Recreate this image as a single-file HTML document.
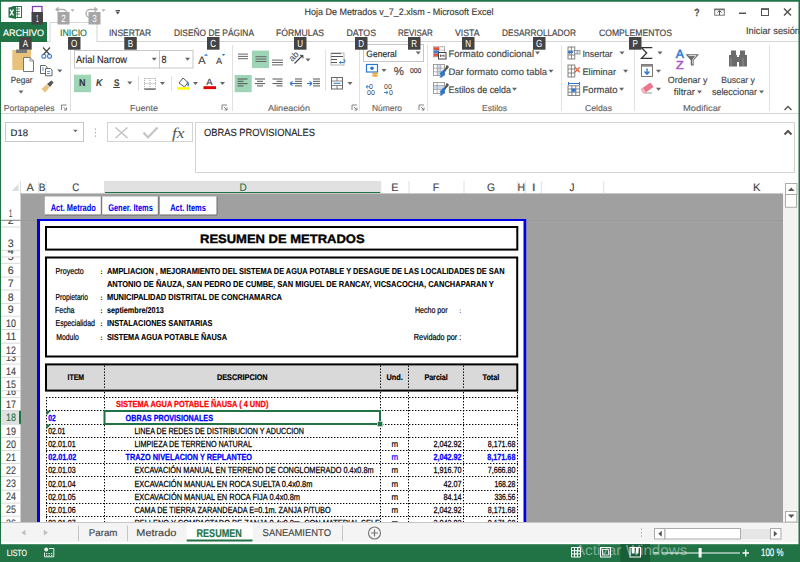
<!DOCTYPE html>
<html><head><meta charset="utf-8"><style>
html,body{margin:0;padding:0;width:800px;height:562px;overflow:hidden;background:#fff}
svg{display:block}
text{font-family:"Liberation Sans",sans-serif;text-rendering:geometricPrecision}
</style></head><body>
<svg width="800" height="562" viewBox="0 0 800 562">
<rect x="0" y="0" width="800" height="562" fill="#fff" />
<rect x="0" y="173" width="800" height="349" fill="#fff" />
<rect x="20" y="194" width="763" height="328" fill="#a0a0a0" />
<rect x="0" y="0" width="800" height="1.5" fill="#217346" />
<rect x="0" y="0" width="1" height="562" fill="#217346" />
<rect x="799" y="0" width="1" height="562" fill="#217346" />
<g><rect x="13" y="6.5" width="8.5" height="11" fill="#fff" stroke="#217346" stroke-width="1"/><path d="M15 9h5M15 11.5h5M15 14h5M17.3 7v10" stroke="#217346" stroke-width="0.8"/><path d="M8.5 7.5l7.5-1.5v13l-7.5-1.5z" fill="#217346"/><path d="M10 9.5l3.5 6M13.5 9.5l-3.5 6" stroke="#fff" stroke-width="1.4"/></g>
<rect x="32.5" y="6.5" width="9.5" height="7" fill="none" stroke="#7c43a8" stroke-width="1.3"/>
<path d="M56 9.5h7a4 4 0 0 1 0 8h-3" fill="none" stroke="#b0b0b0" stroke-width="1.4"/><path d="M55 9.5l3.5-3v6z" fill="#b0b0b0"/>
<path d="M70.5 9.25h4l-2.0 2.5z" fill="#b0b0b0"/>
<path d="M97 9.5h-7a4 4 0 0 0 0 8h3" fill="none" stroke="#b0b0b0" stroke-width="1.4"/><path d="M98 9.5l-3.5-3v6z" fill="#b0b0b0"/>
<path d="M101.5 9.25h4l-2.0 2.5z" fill="#b0b0b0"/>
<rect x="115.5" y="10" width="4.5" height="1" fill="#555" />
<path d="M115.5 11.5h4.5l-2.25 3z" fill="#555"/>
<text x="304.5" y="15.4" font-size="9.44" fill="#3a3a3a" stroke="#3a3a3a" stroke-width="0.15" textLength="189.00" lengthAdjust="spacingAndGlyphs" >Hoja De Metrados v_7_2.xlsm - Microsoft Excel</text>
<text x="694.2" y="15.7" font-size="10.42" fill="#555" stroke="#555" stroke-width="0.3" font-weight="bold" textLength="5.30" lengthAdjust="spacingAndGlyphs" >?</text>
<rect x="714.7" y="9.2" width="9.6" height="6" fill="none" stroke="#777" stroke-width="1"/><rect x="714.2" y="8.7" width="10.5" height="1.6" fill="#777"/><path d="M719.5 15v-4.2M717.5 12.6l2-2 2 2" fill="none" stroke="#555" stroke-width="1"/>
<rect x="739" y="12.5" width="7" height="1.5" fill="#555" />
<rect x="761.5" y="9" width="7" height="6.5" fill="none" stroke="#555" stroke-width="1"/>
<rect x="761" y="8.3" width="8" height="1.6" fill="#555" />
<path d="M784 8.5l7 7M791 8.5l-7 7" stroke="#555" stroke-width="1.5"/>
<rect x="0" y="22" width="47" height="20" fill="#217346" />
<text x="3" y="35.5" font-size="9.31" fill="#fff" stroke="#fff" stroke-width="0.15" textLength="41.00" lengthAdjust="spacingAndGlyphs" >ARCHIVO</text>
<line x1="47" y1="41.5" x2="50" y2="41.5" stroke="#d5d5d5" stroke-width="1" />
<line x1="97" y1="41.5" x2="800" y2="41.5" stroke="#d5d5d5" stroke-width="1" />
<path d="M50 42V22.5H97V42" fill="none" stroke="#d5d5d5" stroke-width="1"/>
<text x="60" y="35.5" font-size="9.31" fill="#217346" stroke="#217346" stroke-width="0.15" textLength="27.00" lengthAdjust="spacingAndGlyphs" >INICIO</text>
<text x="109" y="35.5" font-size="9.31" fill="#444" stroke="#444" stroke-width="0.15" textLength="42.00" lengthAdjust="spacingAndGlyphs" >INSERTAR</text>
<text x="174" y="35.5" font-size="9.31" fill="#444" stroke="#444" stroke-width="0.15" textLength="80.00" lengthAdjust="spacingAndGlyphs" >DISEÑO DE PÁGINA</text>
<text x="276" y="35.5" font-size="9.31" fill="#444" stroke="#444" stroke-width="0.15" textLength="48.00" lengthAdjust="spacingAndGlyphs" >FÓRMULAS</text>
<text x="346.5" y="35.5" font-size="9.31" fill="#444" stroke="#444" stroke-width="0.15" textLength="29.50" lengthAdjust="spacingAndGlyphs" >DATOS</text>
<text x="398" y="35.5" font-size="9.31" fill="#444" stroke="#444" stroke-width="0.15" textLength="34.80" lengthAdjust="spacingAndGlyphs" >REVISAR</text>
<text x="455" y="35.5" font-size="9.31" fill="#444" stroke="#444" stroke-width="0.15" textLength="24.50" lengthAdjust="spacingAndGlyphs" >VISTA</text>
<text x="502" y="35.5" font-size="9.31" fill="#444" stroke="#444" stroke-width="0.15" textLength="74.00" lengthAdjust="spacingAndGlyphs" >DESARROLLADOR</text>
<text x="599" y="35.5" font-size="9.31" fill="#444" stroke="#444" stroke-width="0.15" textLength="73.00" lengthAdjust="spacingAndGlyphs" >COMPLEMENTOS</text>
<text x="746" y="33.5" font-size="9.72" fill="#444" stroke="#444" stroke-width="0.15" textLength="54.00" lengthAdjust="spacingAndGlyphs" >Iniciar sesión</text>
<rect x="31.5" y="12" width="11.5" height="12.5" fill="#444" />
<text x="35.95" y="22.10" font-size="10.3" fill="#fff" textLength="2.60" lengthAdjust="spacingAndGlyphs">1</text>
<rect x="57.5" y="12" width="12.0" height="12.5" fill="#a6a6a6" />
<text x="61.25" y="22.10" font-size="10.3" fill="#fff" textLength="4.50" lengthAdjust="spacingAndGlyphs">2</text>
<rect x="88.5" y="12" width="12.0" height="12.5" fill="#a6a6a6" />
<text x="92.25" y="22.10" font-size="10.3" fill="#fff" textLength="4.50" lengthAdjust="spacingAndGlyphs">3</text>
<line x1="0" y1="113.5" x2="800" y2="113.5" stroke="#d5d5d5" stroke-width="1" />
<line x1="70.5" y1="45" x2="70.5" y2="111" stroke="#e1e1e1" stroke-width="1" />
<line x1="232.5" y1="45" x2="232.5" y2="111" stroke="#e1e1e1" stroke-width="1" />
<line x1="359.5" y1="45" x2="359.5" y2="111" stroke="#e1e1e1" stroke-width="1" />
<line x1="427.5" y1="45" x2="427.5" y2="111" stroke="#e1e1e1" stroke-width="1" />
<line x1="561.5" y1="45" x2="561.5" y2="111" stroke="#e1e1e1" stroke-width="1" />
<line x1="634.5" y1="45" x2="634.5" y2="111" stroke="#e1e1e1" stroke-width="1" />
<line x1="769.5" y1="45" x2="769.5" y2="111" stroke="#e1e1e1" stroke-width="1" />
<text x="3.8" y="110.5" font-size="8.61" fill="#666" stroke="#666" stroke-width="0.15" textLength="50.70" lengthAdjust="spacingAndGlyphs" >Portapapeles</text>
<text x="130" y="110.5" font-size="8.61" fill="#666" stroke="#666" stroke-width="0.15" textLength="28.00" lengthAdjust="spacingAndGlyphs" >Fuente</text>
<text x="268" y="110.5" font-size="8.61" fill="#666" stroke="#666" stroke-width="0.15" textLength="42.00" lengthAdjust="spacingAndGlyphs" >Alineación</text>
<text x="372" y="110.5" font-size="8.61" fill="#666" stroke="#666" stroke-width="0.15" textLength="30.00" lengthAdjust="spacingAndGlyphs" >Número</text>
<text x="482" y="110.5" font-size="8.61" fill="#666" stroke="#666" stroke-width="0.15" textLength="25.00" lengthAdjust="spacingAndGlyphs" >Estilos</text>
<text x="585" y="110.5" font-size="8.61" fill="#666" stroke="#666" stroke-width="0.15" textLength="27.00" lengthAdjust="spacingAndGlyphs" >Celdas</text>
<text x="683" y="110.5" font-size="8.61" fill="#666" stroke="#666" stroke-width="0.15" textLength="38.00" lengthAdjust="spacingAndGlyphs" >Modificar</text>
<path d="M61.5 110v-5h5" fill="none" stroke="#777" stroke-width="0.9"/><path d="M63.5 107l3 3M66.5 107.5v2.5h-2.5" fill="none" stroke="#777" stroke-width="0.9"/>
<path d="M222 110v-5h5" fill="none" stroke="#777" stroke-width="0.9"/><path d="M224 107l3 3M227 107.5v2.5h-2.5" fill="none" stroke="#777" stroke-width="0.9"/>
<path d="M352 110v-5h5" fill="none" stroke="#777" stroke-width="0.9"/><path d="M354 107l3 3M357 107.5v2.5h-2.5" fill="none" stroke="#777" stroke-width="0.9"/>
<path d="M419 110v-5h5" fill="none" stroke="#777" stroke-width="0.9"/><path d="M421 107l3 3M424 107.5v2.5h-2.5" fill="none" stroke="#777" stroke-width="0.9"/>
<rect x="12.3" y="50" width="18.7" height="20" fill="#e8c27a"/><rect x="16" y="49.5" width="11" height="3.5" fill="#7a7a7a"/><path d="M23.5 57.5h6.5l3.5 3.5v10.5h-10z" fill="#fff" stroke="#777" stroke-width="1"/><path d="M30 57.5v3.5h3.5" fill="none" stroke="#777" stroke-width="0.8"/>
<text x="10.7" y="82.7" font-size="8.89" fill="#444" stroke="#444" stroke-width="0.15" textLength="21.80" lengthAdjust="spacingAndGlyphs" >Pegar</text>
<path d="M18.5 90.5h5l-2.5 3z" fill="#666"/>
<path d="M43 47.5l7 7.5M50 47.5l-7 7.5" stroke="#444" stroke-width="1.2"/><circle cx="43.8" cy="56.3" r="2" fill="none" stroke="#3c7fd1" stroke-width="1.1"/><circle cx="49.5" cy="56.3" r="2" fill="none" stroke="#3c7fd1" stroke-width="1.1"/>
<path d="M40.5 65.5h5l1.5 1.5v6.5h-6.5z" fill="#fff" stroke="#555" stroke-width="0.9"/><path d="M45.5 68.5h5l1.5 1.5v5.8h-6.5z" fill="#fff" stroke="#555" stroke-width="0.9"/><path d="M42 68h2M42 70h2M47 71.5h3M47 73.5h3" stroke="#3c7fd1" stroke-width="0.8"/>
<path d="M57.3 69.5h5l-2.5 3z" fill="#666"/>
<path d="M41.5 89l5-4.5 3 3-4.5 5z" fill="#e8c27a"/><path d="M47 84l4.5-3.5 2 2-3.5 4.5z" fill="#555"/>
<rect x="74.5" y="50.5" width="85" height="17.5" fill="#fff" stroke="#c6c6c6" stroke-width="1"/>
<rect x="159.5" y="50.5" width="33.5" height="17.5" fill="#fff" stroke="#c6c6c6" stroke-width="1"/>
<text x="76" y="63" font-size="10.28" fill="#262626" stroke="#262626" stroke-width="0.15" textLength="51.00" lengthAdjust="spacingAndGlyphs" >Arial Narrow</text>
<path d="M151.7 57.8h5l-2.5 3z" fill="#666"/>
<text x="161.5" y="63" font-size="10.28" fill="#262626" stroke="#262626" stroke-width="0.15" textLength="5.00" lengthAdjust="spacingAndGlyphs" >8</text>
<path d="M185.1 57.8h5l-2.5 3z" fill="#666"/>
<text x="198.2" y="63.7" font-size="10.97" fill="#444" stroke="#444" stroke-width="0.15" textLength="7.30" lengthAdjust="spacingAndGlyphs" >A</text>
<path d="M204 55.8l2-2 2 2z" fill="#2b78d0"/>
<text x="215.9" y="63.7" font-size="9.03" fill="#444" stroke="#444" stroke-width="0.15" textLength="6.10" lengthAdjust="spacingAndGlyphs" >A</text>
<path d="M221.8 54l1.7 2 1.7-2z" fill="#2b78d0"/>
<rect x="74" y="74.7" width="17" height="17.5" fill="#9fd5b7" />
<text x="78.9" y="85.9" font-size="9.72" fill="#333" stroke="#333" stroke-width="0.15" font-weight="bold" textLength="6.50" lengthAdjust="spacingAndGlyphs" >N</text>
<text x="96" y="85.9" font-size="9.72" fill="#444" stroke="#444" stroke-width="0.15" font-weight="bold" textLength="6.30" lengthAdjust="spacingAndGlyphs" font-style="italic">K</text>
<text x="113.9" y="85.9" font-size="9.72" fill="#444" stroke="#444" stroke-width="0.15" font-weight="bold" textLength="5.40" lengthAdjust="spacingAndGlyphs" >S</text>
<rect x="113.2" y="87" width="6.6" height="1" fill="#444" />
<path d="M127.30000000000001 81.5h5l-2.5 3z" fill="#666"/>
<line x1="138.5" y1="76" x2="138.5" y2="91" stroke="#e1e1e1" stroke-width="1" />
<path d="M144.5 78.5h11M144.5 83.5h11M150 78v11M144.5 78v11M155.5 78v11" stroke="#999" stroke-width="0.8" stroke-dasharray="1 1"/>
<rect x="144.5" y="88.5" width="11" height="1.2" fill="#444" />
<path d="M160.0 82.0h5l-2.5 3z" fill="#666"/>
<line x1="171.5" y1="76" x2="171.5" y2="91" stroke="#e1e1e1" stroke-width="1" />
<path d="M179 83l4-5 5 4.5-3.5 4.5z" fill="#fff" stroke="#444" stroke-width="0.9"/><path d="M187 82c1.5 1 1.5 3 0.8 4" fill="none" stroke="#2b78d0" stroke-width="1.5"/>
<rect x="177" y="87.2" width="12" height="2.5" fill="#ffff00" />
<path d="M193.0 82.0h5l-2.5 3z" fill="#666"/>
<text x="206.3" y="85" font-size="9.17" fill="#444" stroke="#444" stroke-width="0.15" textLength="6.30" lengthAdjust="spacingAndGlyphs" >A</text>
<rect x="203.5" y="86.2" width="12.5" height="2.9" fill="#e00000" />
<path d="M220.0 82.0h5l-2.5 3z" fill="#666"/>
<rect x="252" y="50.6" width="17" height="17.5" fill="#9fd5b7" />
<rect x="234.7" y="75" width="17" height="17.2" fill="#9fd5b7" />
<rect x="238" y="53.6" width="10" height="1" fill="#666" />
<rect x="238" y="55.9" width="10" height="1" fill="#666" />
<rect x="238" y="58.2" width="10" height="1" fill="#666" />
<rect x="255.5" y="56.2" width="11" height="1" fill="#666" />
<rect x="255.5" y="58.6" width="11" height="1" fill="#666" />
<rect x="255.5" y="61.0" width="11" height="1" fill="#666" />
<rect x="272" y="59.6" width="11" height="1" fill="#666" />
<rect x="272" y="62.0" width="11" height="1" fill="#666" />
<rect x="272" y="64.4" width="11" height="1" fill="#666" />
<text x="289" y="60" font-size="9" fill="#444" transform="rotate(-45 293 57)">ab</text>
<path d="M294.5 63.5l8-8M300 55.2l2.8 0.3 0.2 2.8" fill="none" stroke="#444" stroke-width="1.1"/>
<path d="M305.5 58.5h5l-2.5 3z" fill="#666"/>
<rect x="237.5" y="78.5" width="10" height="1" fill="#555" />
<rect x="237.5" y="80.8" width="6" height="1" fill="#555" />
<rect x="237.5" y="83.1" width="10" height="1" fill="#555" />
<rect x="237.5" y="85.4" width="6" height="1" fill="#555" />
<rect x="255" y="78.5" width="10" height="1" fill="#555" />
<rect x="257" y="80.8" width="6" height="1" fill="#555" />
<rect x="255" y="83.1" width="10" height="1" fill="#555" />
<rect x="257" y="85.4" width="6" height="1" fill="#555" />
<rect x="272.5" y="78.5" width="10" height="1" fill="#555" />
<rect x="276.5" y="80.8" width="6" height="1" fill="#555" />
<rect x="272.5" y="83.1" width="10" height="1" fill="#555" />
<rect x="276.5" y="85.4" width="6" height="1" fill="#555" />
<rect x="295" y="78.5" width="7" height="1" fill="#555" />
<rect x="295" y="80.8" width="7" height="1" fill="#555" />
<rect x="295" y="83.1" width="7" height="1" fill="#555" />
<rect x="295" y="85.4" width="7" height="1" fill="#555" />
<path d="M290 83.5h5M290 83.5l2.5-2.2M290 83.5l2.5 2.2" stroke="#2b78d0" stroke-width="1.1" fill="none"/>
<rect x="313" y="78.5" width="7" height="1" fill="#555" />
<rect x="313" y="80.8" width="7" height="1" fill="#555" />
<rect x="313" y="83.1" width="7" height="1" fill="#555" />
<rect x="313" y="85.4" width="7" height="1" fill="#555" />
<path d="M307 83.5h5M312 83.5l-2.5-2.2M312 83.5l-2.5 2.2" stroke="#2b78d0" stroke-width="1.1" fill="none"/>
<line x1="325.5" y1="50" x2="325.5" y2="91" stroke="#e1e1e1" stroke-width="1" />
<path d="M331 53.5h10M331 56.5h12M331 59.5h6M331 62.5h6" stroke="#555" stroke-width="1"/><path d="M339 62.5h4.5a1.5 1.5 0 0 0 0-3" fill="none" stroke="#2b78d0" stroke-width="1.1"/><path d="M339 62.5l2-1.5v3z" fill="#2b78d0"/>
<rect x="331" y="53" width="13" height="12" fill="none" stroke="#888" stroke-width="0.6"/>
<rect x="331.5" y="77.5" width="11" height="11.5" fill="#fff" stroke="#666" stroke-width="1"/><path d="M331.5 81h11M331.5 85.5h11M337 77.5v3.5M337 85.5v3.5" stroke="#666" stroke-width="0.8"/><path d="M333.5 83.3h7" stroke="#2b78d0" stroke-width="1"/>
<path d="M347.5 82.0h5l-2.5 3z" fill="#666"/>
<rect x="363.5" y="44.5" width="60" height="17" fill="#fff" stroke="#c6c6c6" stroke-width="1"/>
<text x="366.3" y="56.5" font-size="9.31" fill="#262626" stroke="#262626" stroke-width="0.15" textLength="30.30" lengthAdjust="spacingAndGlyphs" >General</text>
<path d="M415.7 51.5h5l-2.5 3z" fill="#666"/>
<rect x="366.5" y="64.5" width="11" height="7.5" fill="#fff" stroke="#2b78d0" stroke-width="1.2"/><circle cx="372" cy="68.3" r="1.8" fill="#2b78d0"/><ellipse cx="375" cy="73.5" rx="3" ry="1.1" fill="#e8a33a"/><ellipse cx="375" cy="75.7" rx="3" ry="1.1" fill="#e8a33a"/>
<path d="M381.5 69.0h5l-2.5 3z" fill="#666"/>
<text x="393.8" y="75.4" font-size="11.50" fill="#444" stroke="#444" stroke-width="0.15" textLength="10.20" lengthAdjust="spacingAndGlyphs" >%</text>
<text x="410" y="72.8" font-size="7.20" fill="#333" stroke="#333" stroke-width="0.15" textLength="11.40" lengthAdjust="spacingAndGlyphs" >000</text>
<text x="369" y="89" font-size="7" fill="#444">0</text><text x="367" y="94.5" font-size="7" fill="#444">00</text><path d="M366 86.8h4M366 86.8l1.8-1.5M366 86.8l1.8 1.5" stroke="#2b78d0" stroke-width="0.9" fill="none"/>
<text x="384" y="89" font-size="7" fill="#444">00</text><text x="389" y="94.5" font-size="7" fill="#444">0</text><path d="M384 92.5h4M388 92.5l-1.8-1.5M388 92.5l-1.8 1.5" stroke="#2b78d0" stroke-width="0.9" fill="none"/>
<rect x="433.5" y="46.8" width="11" height="10" fill="#fff" stroke="#999" stroke-width="0.8"/><path d="M439 46.8v10M433.5 50.1h11M433.5 53.4h11" stroke="#aaa" stroke-width="0.7"/><rect x="434" y="47.2" width="5" height="2.9" fill="#e0533b"/><rect x="434" y="50.4" width="5" height="2.9" fill="#3c7fd1"/><rect x="434" y="53.6" width="5" height="2.9" fill="#e0533b"/><rect x="438.5" y="52.5" width="7.5" height="6.5" fill="#fff" stroke="#444" stroke-width="1"/><path d="M440.5 54.5v2.5M444 54.5v2.5M440.5 55.75h3.5" stroke="#444" stroke-width="0.8"/>
<text x="448.5" y="56.9" font-size="9.58" fill="#444" stroke="#444" stroke-width="0.15" textLength="85.50" lengthAdjust="spacingAndGlyphs" >Formato condicional</text>
<path d="M535.0 51.5h5l-2.5 3z" fill="#666"/>
<rect x="433.5" y="64.5" width="11" height="11" fill="#fff" stroke="#888" stroke-width="0.8"/>
<rect x="437.2" y="65" width="3.6" height="10" fill="#c9d9ee"/><path d="M437.2 64.5v11M440.8 64.5v11M433.5 68.2h11M433.5 71.8h11" stroke="#999" stroke-width="0.7"/>
<path d="M446.5 65.5l1.5 1.5-5 6" fill="#555" stroke="#555" stroke-width="1.6"/><path d="M443.8 72.2l-4.5 5.3h2.5l3.5-3.5z" fill="#2b78d0"/><path d="M444.5 70.5l-4 4.2" stroke="#2b78d0" stroke-width="2.8"/>
<text x="448.5" y="74.8" font-size="9.44" fill="#444" stroke="#444" stroke-width="0.15" textLength="98.50" lengthAdjust="spacingAndGlyphs" >Dar formato como tabla</text>
<path d="M548.5 69.8h5l-2.5 3z" fill="#666"/>
<rect x="433.5" y="82.5" width="11" height="11" fill="#fff" stroke="#888" stroke-width="0.8"/>
<rect x="434" y="85.5" width="10" height="4" fill="#c9d9ee"/><path d="M433.5 85.5h11M433.5 89.5h11M437.2 82.5v11" stroke="#999" stroke-width="0.7"/>
<path d="M446.5 83.5l1.5 1.5-5 6" fill="#555" stroke="#555" stroke-width="1.6"/><path d="M443.8 90.2l-4.5 5.3h2.5l3.5-3.5z" fill="#2b78d0"/><path d="M444.5 88.5l-4 4.2" stroke="#2b78d0" stroke-width="2.8"/>
<text x="448.5" y="92.9" font-size="9.58" fill="#444" stroke="#444" stroke-width="0.15" textLength="62.50" lengthAdjust="spacingAndGlyphs" >Estilos de celda</text>
<path d="M512.0 87.8h5l-2.5 3z" fill="#666"/>
<rect x="568.0" y="47.0" width="6.8" height="12" fill="#fff" stroke="#777" stroke-width="0.9"/>
<line x1="568.0" y1="51.0" x2="574.8" y2="51.0" stroke="#777" stroke-width="0.9" />
<line x1="568.0" y1="55.0" x2="574.8" y2="55.0" stroke="#777" stroke-width="0.9" />
<line x1="571.4" y1="47.0" x2="571.4" y2="59.0" stroke="#777" stroke-width="0.9" />
<rect x="574.5" y="50.5" width="5.5" height="3.5" fill="#dfe8f3" stroke="#888" stroke-width="0.8"/><path d="M577.3 50.5v3.5" stroke="#888" stroke-width="0.8"/>
<path d="M568.5 52.3h4.5" stroke="#2b78d0" stroke-width="1.5"/><path d="M567.8 52.3l2.4-2.3v4.6z" fill="#2b78d0"/>
<text x="582.4" y="56.9" font-size="9.44" fill="#444" stroke="#444" stroke-width="0.15" textLength="30.20" lengthAdjust="spacingAndGlyphs" >Insertar</text>
<path d="M619.5 51.5h5l-2.5 3z" fill="#666"/>
<rect x="568.0" y="65.0" width="6.8" height="12" fill="#fff" stroke="#777" stroke-width="0.9"/>
<line x1="568.0" y1="69.0" x2="574.8" y2="69.0" stroke="#777" stroke-width="0.9" />
<line x1="568.0" y1="73.0" x2="574.8" y2="73.0" stroke="#777" stroke-width="0.9" />
<line x1="571.4" y1="65.0" x2="571.4" y2="77.0" stroke="#777" stroke-width="0.9" />
<path d="M574.8 67.3l5 5M579.8 67.3l-5 5" stroke="#e8603c" stroke-width="1.3"/>
<text x="582.4" y="74.8" font-size="9.31" fill="#444" stroke="#444" stroke-width="0.15" textLength="33.60" lengthAdjust="spacingAndGlyphs" >Eliminar</text>
<path d="M623.1 69.8h5l-2.5 3z" fill="#666"/>
<rect x="568.0" y="85.8" width="11.7" height="9.600000000000001" fill="#fff" stroke="#777" stroke-width="0.9"/>
<line x1="568.0" y1="89.0" x2="579.7" y2="89.0" stroke="#777" stroke-width="0.9" />
<line x1="568.0" y1="92.2" x2="579.7" y2="92.2" stroke="#777" stroke-width="0.9" />
<line x1="571.9" y1="85.8" x2="571.9" y2="95.4" stroke="#777" stroke-width="0.9" />
<line x1="575.8" y1="85.8" x2="575.8" y2="95.4" stroke="#777" stroke-width="0.9" />
<rect x="571.5" y="88.6" width="4" height="3.2" fill="#2b78d0" />
<path d="M568.5 83.5h11M568.5 82v3M579.5 82v3" stroke="#2b78d0" stroke-width="1"/>
<text x="582.4" y="92.9" font-size="9.58" fill="#444" stroke="#444" stroke-width="0.15" textLength="35.10" lengthAdjust="spacingAndGlyphs" >Formato</text>
<path d="M619.1 87.8h5l-2.5 3z" fill="#666"/>
<path d="M652.3 47.7h-10.8l5.2 5.3-5.2 5.3h10.8" fill="none" stroke="#333" stroke-width="1.3"/>
<path d="M657.5 51.5h5l-2.5 3z" fill="#666"/>
<rect x="641.5" y="64.5" width="11" height="12" fill="#fff" stroke="#777" stroke-width="1"/><rect x="641.5" y="64.5" width="11" height="2.2" fill="#888"/><path d="M647 68.5v5.5M644.5 71.5l2.5 2.8 2.5-2.8" fill="none" stroke="#2b78d0" stroke-width="1.4"/>
<path d="M656.0 69.8h5l-2.5 3z" fill="#666"/>
<g transform="rotate(-35 647 88)"><rect x="641" y="85.5" width="12" height="5.5" rx="1" fill="#e8778a"/><rect x="641" y="85.5" width="2.8" height="5.5" fill="#f3b5c0"/></g><path d="M645 93h7" stroke="#888" stroke-width="0.9"/>
<path d="M656.0 87.8h5l-2.5 3z" fill="#666"/>
<text x="675.8" y="57.8" font-size="11.94" fill="#2b78d0" stroke="#2b78d0" stroke-width="0.5" textLength="8.20" lengthAdjust="spacingAndGlyphs" >A</text>
<text x="676" y="68.8" font-size="11.53" fill="#a855c8" stroke="#a855c8" stroke-width="0.5" textLength="7.70" lengthAdjust="spacingAndGlyphs" >Z</text>
<path d="M685.5 54.3h13.5l-5.2 6v5.2h-3v-5.2z" fill="#6a6a6a"/><path d="M688.5 55.6h7.5l-3.2 3.8v5" fill="none" stroke="#fff" stroke-width="0.8"/>
<text x="667.8" y="82.9" font-size="9.03" fill="#444" stroke="#444" stroke-width="0.15" textLength="39.70" lengthAdjust="spacingAndGlyphs" >Ordenar y</text>
<text x="673.8" y="95" font-size="9.44" fill="#444" stroke="#444" stroke-width="0.15" textLength="21.20" lengthAdjust="spacingAndGlyphs" >filtrar</text>
<path d="M697.0 90.5h5l-2.5 3z" fill="#666"/>
<g fill="#6b6b6b"><rect x="731" y="50.5" width="5" height="5"/><rect x="740" y="50.5" width="5" height="5"/><rect x="729" y="55" width="8" height="11.5"/><rect x="739" y="55" width="8" height="11.5"/><rect x="736" y="57" width="4" height="5"/></g><path d="M731 58v8M743 58v8" stroke="#999" stroke-width="0.8"/>
<text x="721.2" y="82.9" font-size="9.03" fill="#444" stroke="#444" stroke-width="0.15" textLength="33.70" lengthAdjust="spacingAndGlyphs" >Buscar y</text>
<text x="712" y="95" font-size="9.44" fill="#444" stroke="#444" stroke-width="0.15" textLength="45.00" lengthAdjust="spacingAndGlyphs" >seleccionar</text>
<path d="M759.0 90.5h5l-2.5 3z" fill="#666"/>
<path d="M784.5 110l3.5-3.5 3.5 3.5" fill="none" stroke="#555" stroke-width="1.4"/>
<rect x="19.2" y="37" width="12.5" height="12.700000000000003" fill="#444" />
<text x="22.76" y="47.10" font-size="10.3" fill="#fff" textLength="5.38" lengthAdjust="spacingAndGlyphs">A</text>
<rect x="68" y="37" width="12.5" height="12.700000000000003" fill="#444" />
<text x="71.12" y="47.10" font-size="10.3" fill="#fff" textLength="6.27" lengthAdjust="spacingAndGlyphs">O</text>
<rect x="124.3" y="37" width="12.500000000000014" height="12.700000000000003" fill="#444" />
<text x="127.86" y="47.10" font-size="10.3" fill="#fff" textLength="5.38" lengthAdjust="spacingAndGlyphs">B</text>
<rect x="207" y="37" width="12.5" height="12.700000000000003" fill="#444" />
<text x="210.36" y="47.10" font-size="10.3" fill="#fff" textLength="5.78" lengthAdjust="spacingAndGlyphs">C</text>
<rect x="294" y="37" width="12.5" height="12.700000000000003" fill="#444" />
<text x="297.36" y="47.10" font-size="10.3" fill="#fff" textLength="5.78" lengthAdjust="spacingAndGlyphs">U</text>
<rect x="355" y="37" width="12.5" height="12.700000000000003" fill="#444" />
<text x="358.36" y="47.10" font-size="10.3" fill="#fff" textLength="5.78" lengthAdjust="spacingAndGlyphs">D</text>
<rect x="408" y="37" width="12.5" height="12.700000000000003" fill="#444" />
<text x="411.36" y="47.10" font-size="10.3" fill="#fff" textLength="5.78" lengthAdjust="spacingAndGlyphs">R</text>
<rect x="462" y="37" width="12.5" height="12.700000000000003" fill="#444" />
<text x="465.36" y="47.10" font-size="10.3" fill="#fff" textLength="5.78" lengthAdjust="spacingAndGlyphs">N</text>
<rect x="533" y="37" width="12.5" height="12.700000000000003" fill="#444" />
<text x="536.12" y="47.10" font-size="10.3" fill="#fff" textLength="6.27" lengthAdjust="spacingAndGlyphs">G</text>
<rect x="629" y="37" width="12.5" height="12.700000000000003" fill="#444" />
<text x="632.56" y="47.10" font-size="10.3" fill="#fff" textLength="5.38" lengthAdjust="spacingAndGlyphs">P</text>
<rect x="5.5" y="122.5" width="78" height="19" fill="#fff" stroke="#c6c6c6" stroke-width="1"/>
<text x="10.5" y="136" font-size="9.44" fill="#262626" stroke="#262626" stroke-width="0.15" textLength="17.50" lengthAdjust="spacingAndGlyphs" >D18</text>
<path d="M73.15 129.75h4.5l-2.25 2.5z" fill="#666"/>
<rect x="95" y="128.5" width="1" height="1.2" fill="#999" />
<rect x="95" y="132" width="1" height="1.2" fill="#999" />
<rect x="95" y="135.5" width="1" height="1.2" fill="#999" />
<rect x="107.5" y="122.5" width="85" height="19" fill="#fff" stroke="#d4d4d4" stroke-width="1"/>
<path d="M115.5 127.5l12 10.5M127.5 127.5l-12 10.5" stroke="#c4c4c4" stroke-width="1.6"/>
<path d="M143.5 132.5l4.5 5 9.5-10" fill="none" stroke="#c4c4c4" stroke-width="2.2"/>
<text x="172" y="138" style="font-family:'Liberation Serif',serif;font-style:italic" font-size="15" fill="#555" textLength="12.5" lengthAdjust="spacingAndGlyphs">fx</text>
<rect x="195.5" y="122.5" width="599" height="50" fill="#fff" stroke="#d4d4d4" stroke-width="1"/>
<text x="204" y="136" font-size="10.42" fill="#262626" stroke="#262626" stroke-width="0.15" textLength="111.00" lengthAdjust="spacingAndGlyphs" >OBRAS PROVISIONALES</text>
<path d="M784.5 134.5l3.5-3.5 3.5 3.5" fill="none" stroke="#555" stroke-width="2"/>
<rect x="1" y="173.5" width="798" height="20.5" fill="#fff" />
<path d="M11.5 191h7v-7z" fill="#dcdcdc"/>
<rect x="104.2" y="181" width="276.3" height="13" fill="#e1e1e1" />
<rect x="104.2" y="192" width="276.3" height="2" fill="#217346" />
<line x1="20.5" y1="181" x2="20.5" y2="193.5" stroke="#e0e0e0" stroke-width="1" />
<line x1="38.5" y1="181" x2="38.5" y2="193.5" stroke="#e0e0e0" stroke-width="1" />
<line x1="46.0" y1="181" x2="46.0" y2="193.5" stroke="#e0e0e0" stroke-width="1" />
<line x1="104.5" y1="181" x2="104.5" y2="193.5" stroke="#e0e0e0" stroke-width="1" />
<line x1="380.8" y1="181" x2="380.8" y2="193.5" stroke="#e0e0e0" stroke-width="1" />
<line x1="409.0" y1="181" x2="409.0" y2="193.5" stroke="#e0e0e0" stroke-width="1" />
<line x1="464.0" y1="181" x2="464.0" y2="193.5" stroke="#e0e0e0" stroke-width="1" />
<line x1="517.8" y1="181" x2="517.8" y2="193.5" stroke="#e0e0e0" stroke-width="1" />
<line x1="525.3" y1="181" x2="525.3" y2="193.5" stroke="#e0e0e0" stroke-width="1" />
<line x1="541.3" y1="181" x2="541.3" y2="193.5" stroke="#e0e0e0" stroke-width="1" />
<line x1="603.6999999999999" y1="181" x2="603.6999999999999" y2="193.5" stroke="#e0e0e0" stroke-width="1" />
<line x1="20" y1="193.5" x2="783" y2="193.5" stroke="#c8c8c8" stroke-width="1" />
<text x="26.5" y="190.75" font-size="10.90" fill="#444" stroke="#444" stroke-width="0.15" textLength="7.30" lengthAdjust="spacingAndGlyphs" >A</text>
<text x="38.8" y="190.75" font-size="10.90" fill="#444" stroke="#444" stroke-width="0.15" textLength="6.70" lengthAdjust="spacingAndGlyphs" >B</text>
<text x="72.2" y="190.75" font-size="10.90" fill="#444" stroke="#444" stroke-width="0.15" textLength="7.00" lengthAdjust="spacingAndGlyphs" >C</text>
<text x="239.5" y="190.75" font-size="10.90" fill="#217346" stroke="#217346" stroke-width="0.15" textLength="7.20" lengthAdjust="spacingAndGlyphs" >D</text>
<text x="391.3" y="190.75" font-size="10.90" fill="#444" stroke="#444" stroke-width="0.15" textLength="7.20" lengthAdjust="spacingAndGlyphs" >E</text>
<text x="432.8" y="190.75" font-size="10.90" fill="#444" stroke="#444" stroke-width="0.15" textLength="6.50" lengthAdjust="spacingAndGlyphs" >F</text>
<text x="487.0" y="190.75" font-size="10.90" fill="#444" stroke="#444" stroke-width="0.15" textLength="8.00" lengthAdjust="spacingAndGlyphs" >G</text>
<text x="517.5" y="190.75" font-size="10.90" fill="#444" stroke="#444" stroke-width="0.15" textLength="7.50" lengthAdjust="spacingAndGlyphs" >H</text>
<text x="532.0" y="190.75" font-size="10.90" fill="#444" stroke="#444" stroke-width="0.15" textLength="3.50" lengthAdjust="spacingAndGlyphs" >I</text>
<text x="569.5" y="190.75" font-size="10.90" fill="#444" stroke="#444" stroke-width="0.15" textLength="5.00" lengthAdjust="spacingAndGlyphs" >J</text>
<text x="753.0" y="190.75" font-size="10.90" fill="#444" stroke="#444" stroke-width="0.15" textLength="7.50" lengthAdjust="spacingAndGlyphs" >K</text>
<rect x="20.5" y="194" width="762.5" height="328" fill="#a0a0a0" />
<rect x="1" y="194" width="19.5" height="328" fill="#fff" />
<rect x="1" y="410.5" width="18" height="13.7" fill="#e1e1e1" />
<rect x="19" y="410.5" width="2" height="13.7" fill="#217346" />
<line x1="1" y1="220.3" x2="20" y2="220.3" stroke="#d9d9d9" stroke-width="1" />
<line x1="1" y1="227" x2="20" y2="227" stroke="#d9d9d9" stroke-width="1" />
<line x1="1" y1="250.3" x2="20" y2="250.3" stroke="#d9d9d9" stroke-width="1" />
<line x1="1" y1="257" x2="20" y2="257" stroke="#d9d9d9" stroke-width="1" />
<line x1="1" y1="263.3" x2="20" y2="263.3" stroke="#d9d9d9" stroke-width="1" />
<line x1="1" y1="277" x2="20" y2="277" stroke="#d9d9d9" stroke-width="1" />
<line x1="1" y1="290" x2="20" y2="290" stroke="#d9d9d9" stroke-width="1" />
<line x1="1" y1="303.4" x2="20" y2="303.4" stroke="#d9d9d9" stroke-width="1" />
<line x1="1" y1="316.2" x2="20" y2="316.2" stroke="#d9d9d9" stroke-width="1" />
<line x1="1" y1="329.5" x2="20" y2="329.5" stroke="#d9d9d9" stroke-width="1" />
<line x1="1" y1="343.2" x2="20" y2="343.2" stroke="#d9d9d9" stroke-width="1" />
<line x1="1" y1="356.6" x2="20" y2="356.6" stroke="#d9d9d9" stroke-width="1" />
<line x1="1" y1="364.1" x2="20" y2="364.1" stroke="#d9d9d9" stroke-width="1" />
<line x1="1" y1="377.4" x2="20" y2="377.4" stroke="#d9d9d9" stroke-width="1" />
<line x1="1" y1="390.8" x2="20" y2="390.8" stroke="#d9d9d9" stroke-width="1" />
<line x1="1" y1="397.6" x2="20" y2="397.6" stroke="#d9d9d9" stroke-width="1" />
<line x1="1" y1="410.5" x2="20" y2="410.5" stroke="#d9d9d9" stroke-width="1" />
<line x1="1" y1="424.2" x2="20" y2="424.2" stroke="#d9d9d9" stroke-width="1" />
<line x1="1" y1="437.4" x2="20" y2="437.4" stroke="#d9d9d9" stroke-width="1" />
<line x1="1" y1="450.5" x2="20" y2="450.5" stroke="#d9d9d9" stroke-width="1" />
<line x1="1" y1="463.5" x2="20" y2="463.5" stroke="#d9d9d9" stroke-width="1" />
<line x1="1" y1="476.5" x2="20" y2="476.5" stroke="#d9d9d9" stroke-width="1" />
<line x1="1" y1="490.2" x2="20" y2="490.2" stroke="#d9d9d9" stroke-width="1" />
<line x1="1" y1="503.1" x2="20" y2="503.1" stroke="#d9d9d9" stroke-width="1" />
<line x1="1" y1="516.2" x2="20" y2="516.2" stroke="#d9d9d9" stroke-width="1" />
<line x1="1" y1="220.3" x2="20.5" y2="220.3" stroke="#8a8a8a" stroke-width="1" />
<line x1="20.5" y1="220.6" x2="783" y2="220.6" stroke="#9a9a9a" stroke-width="1" />
<clipPath id="rh"><rect x="1" y="194" width="19" height="328"/></clipPath>
<g clip-path="url(#rh)">
<clipPath id="r1"><rect x="1" y="194" width="19" height="26.30000000000001"/></clipPath>
<g clip-path="url(#r1)">
<text x="9.1" y="217.4" font-size="10.83" fill="#444" stroke="#444" stroke-width="0.15" textLength="3.20" lengthAdjust="spacingAndGlyphs" >1</text>
</g>
<clipPath id="r2"><rect x="1" y="220.3" width="19" height="6.699999999999989"/></clipPath>
<g clip-path="url(#r2)">
<text x="7.749999999999999" y="224.1" font-size="10.83" fill="#444" stroke="#444" stroke-width="0.15" textLength="5.90" lengthAdjust="spacingAndGlyphs" >2</text>
</g>
<clipPath id="r3"><rect x="1" y="227" width="19" height="23.30000000000001"/></clipPath>
<g clip-path="url(#r3)">
<text x="7.749999999999999" y="247.4" font-size="10.83" fill="#444" stroke="#444" stroke-width="0.15" textLength="5.90" lengthAdjust="spacingAndGlyphs" >3</text>
</g>
<clipPath id="r4"><rect x="1" y="250.3" width="19" height="6.699999999999989"/></clipPath>
<g clip-path="url(#r4)">
<text x="7.749999999999999" y="254.1" font-size="10.83" fill="#444" stroke="#444" stroke-width="0.15" textLength="5.90" lengthAdjust="spacingAndGlyphs" >4</text>
</g>
<clipPath id="r5"><rect x="1" y="257" width="19" height="6.300000000000011"/></clipPath>
<g clip-path="url(#r5)">
<text x="7.749999999999999" y="260.40000000000003" font-size="10.83" fill="#444" stroke="#444" stroke-width="0.15" textLength="5.90" lengthAdjust="spacingAndGlyphs" >5</text>
</g>
<clipPath id="r6"><rect x="1" y="263.3" width="19" height="13.699999999999989"/></clipPath>
<g clip-path="url(#r6)">
<text x="7.749999999999999" y="274.1" font-size="10.83" fill="#444" stroke="#444" stroke-width="0.15" textLength="5.90" lengthAdjust="spacingAndGlyphs" >6</text>
</g>
<clipPath id="r7"><rect x="1" y="277" width="19" height="13"/></clipPath>
<g clip-path="url(#r7)">
<text x="7.749999999999999" y="287.1" font-size="10.83" fill="#444" stroke="#444" stroke-width="0.15" textLength="5.90" lengthAdjust="spacingAndGlyphs" >7</text>
</g>
<clipPath id="r8"><rect x="1" y="290" width="19" height="13.399999999999977"/></clipPath>
<g clip-path="url(#r8)">
<text x="7.749999999999999" y="300.5" font-size="10.83" fill="#444" stroke="#444" stroke-width="0.15" textLength="5.90" lengthAdjust="spacingAndGlyphs" >8</text>
</g>
<clipPath id="r9"><rect x="1" y="303.4" width="19" height="12.800000000000011"/></clipPath>
<g clip-path="url(#r9)">
<text x="7.749999999999999" y="313.3" font-size="10.83" fill="#444" stroke="#444" stroke-width="0.15" textLength="5.90" lengthAdjust="spacingAndGlyphs" >9</text>
</g>
<clipPath id="r10"><rect x="1" y="316.2" width="19" height="13.300000000000011"/></clipPath>
<g clip-path="url(#r10)">
<text x="6.05" y="326.6" font-size="10.83" fill="#444" stroke="#444" stroke-width="0.15" textLength="9.90" lengthAdjust="spacingAndGlyphs" >10</text>
</g>
<clipPath id="r11"><rect x="1" y="329.5" width="19" height="13.699999999999989"/></clipPath>
<g clip-path="url(#r11)">
<text x="6.05" y="340.3" font-size="10.83" fill="#444" stroke="#444" stroke-width="0.15" textLength="9.90" lengthAdjust="spacingAndGlyphs" >11</text>
</g>
<clipPath id="r12"><rect x="1" y="343.2" width="19" height="13.400000000000034"/></clipPath>
<g clip-path="url(#r12)">
<text x="6.05" y="353.70000000000005" font-size="10.83" fill="#444" stroke="#444" stroke-width="0.15" textLength="9.90" lengthAdjust="spacingAndGlyphs" >12</text>
</g>
<clipPath id="r13"><rect x="1" y="356.6" width="19" height="7.5"/></clipPath>
<g clip-path="url(#r13)">
<text x="6.05" y="361.20000000000005" font-size="10.83" fill="#444" stroke="#444" stroke-width="0.15" textLength="9.90" lengthAdjust="spacingAndGlyphs" >13</text>
</g>
<clipPath id="r14"><rect x="1" y="364.1" width="19" height="13.299999999999955"/></clipPath>
<g clip-path="url(#r14)">
<text x="6.05" y="374.5" font-size="10.83" fill="#444" stroke="#444" stroke-width="0.15" textLength="9.90" lengthAdjust="spacingAndGlyphs" >14</text>
</g>
<clipPath id="r15"><rect x="1" y="377.4" width="19" height="13.400000000000034"/></clipPath>
<g clip-path="url(#r15)">
<text x="6.05" y="387.90000000000003" font-size="10.83" fill="#444" stroke="#444" stroke-width="0.15" textLength="9.90" lengthAdjust="spacingAndGlyphs" >15</text>
</g>
<clipPath id="r16"><rect x="1" y="390.8" width="19" height="6.800000000000011"/></clipPath>
<g clip-path="url(#r16)">
<text x="6.05" y="394.70000000000005" font-size="10.83" fill="#444" stroke="#444" stroke-width="0.15" textLength="9.90" lengthAdjust="spacingAndGlyphs" >16</text>
</g>
<clipPath id="r17"><rect x="1" y="397.6" width="19" height="12.899999999999977"/></clipPath>
<g clip-path="url(#r17)">
<text x="6.05" y="407.6" font-size="10.83" fill="#444" stroke="#444" stroke-width="0.15" textLength="9.90" lengthAdjust="spacingAndGlyphs" >17</text>
</g>
<clipPath id="r18"><rect x="1" y="410.5" width="19" height="13.699999999999989"/></clipPath>
<g clip-path="url(#r18)">
<text x="6.05" y="421.3" font-size="10.83" fill="#217346" stroke="#217346" stroke-width="0.15" textLength="9.90" lengthAdjust="spacingAndGlyphs" >18</text>
</g>
<clipPath id="r19"><rect x="1" y="424.2" width="19" height="13.199999999999989"/></clipPath>
<g clip-path="url(#r19)">
<text x="6.05" y="434.5" font-size="10.83" fill="#444" stroke="#444" stroke-width="0.15" textLength="9.90" lengthAdjust="spacingAndGlyphs" >19</text>
</g>
<clipPath id="r20"><rect x="1" y="437.4" width="19" height="13.100000000000023"/></clipPath>
<g clip-path="url(#r20)">
<text x="6.05" y="447.6" font-size="10.83" fill="#444" stroke="#444" stroke-width="0.15" textLength="9.90" lengthAdjust="spacingAndGlyphs" >20</text>
</g>
<clipPath id="r21"><rect x="1" y="450.5" width="19" height="13.0"/></clipPath>
<g clip-path="url(#r21)">
<text x="6.05" y="460.6" font-size="10.83" fill="#444" stroke="#444" stroke-width="0.15" textLength="9.90" lengthAdjust="spacingAndGlyphs" >21</text>
</g>
<clipPath id="r22"><rect x="1" y="463.5" width="19" height="13.0"/></clipPath>
<g clip-path="url(#r22)">
<text x="6.05" y="473.6" font-size="10.83" fill="#444" stroke="#444" stroke-width="0.15" textLength="9.90" lengthAdjust="spacingAndGlyphs" >22</text>
</g>
<clipPath id="r23"><rect x="1" y="476.5" width="19" height="13.699999999999989"/></clipPath>
<g clip-path="url(#r23)">
<text x="6.05" y="487.3" font-size="10.83" fill="#444" stroke="#444" stroke-width="0.15" textLength="9.90" lengthAdjust="spacingAndGlyphs" >23</text>
</g>
<clipPath id="r24"><rect x="1" y="490.2" width="19" height="12.900000000000034"/></clipPath>
<g clip-path="url(#r24)">
<text x="6.05" y="500.20000000000005" font-size="10.83" fill="#444" stroke="#444" stroke-width="0.15" textLength="9.90" lengthAdjust="spacingAndGlyphs" >24</text>
</g>
<clipPath id="r25"><rect x="1" y="503.1" width="19" height="13.100000000000023"/></clipPath>
<g clip-path="url(#r25)">
<text x="6.05" y="513.3000000000001" font-size="10.83" fill="#444" stroke="#444" stroke-width="0.15" textLength="9.90" lengthAdjust="spacingAndGlyphs" >25</text>
</g>
<clipPath id="r26"><rect x="1" y="516.2" width="19" height="13.299999999999955"/></clipPath>
<g clip-path="url(#r26)">
<text x="6.05" y="526.6" font-size="10.83" fill="#444" stroke="#444" stroke-width="0.15" textLength="9.90" lengthAdjust="spacingAndGlyphs" >26</text>
</g>
</g>
<rect x="44.8" y="196.5" width="56.5" height="18.5" fill="#fdfdfd" />
<path d="M44.8 215h56.5v-18.5" fill="none" stroke="#6d6d6d" stroke-width="1"/>
<text x="50.7" y="211.4" font-size="9.86" fill="#0000ee" font-weight="bold" textLength="45.10" lengthAdjust="spacingAndGlyphs" >Act. Metrado</text>
<rect x="102.3" y="196.5" width="56.000000000000014" height="18.5" fill="#fdfdfd" />
<path d="M102.3 215h56.000000000000014v-18.5" fill="none" stroke="#6d6d6d" stroke-width="1"/>
<text x="108.2" y="211.4" font-size="9.86" fill="#0000ee" font-weight="bold" textLength="44.60" lengthAdjust="spacingAndGlyphs" >Gener. Items</text>
<rect x="160" y="196.5" width="57" height="18.5" fill="#fdfdfd" />
<path d="M160 215h57v-18.5" fill="none" stroke="#6d6d6d" stroke-width="1"/>
<text x="170.2" y="211.4" font-size="9.86" fill="#0000ee" font-weight="bold" textLength="35.60" lengthAdjust="spacingAndGlyphs" >Act. Items</text>
<rect x="37" y="219" width="489" height="303" fill="#fff" />
<rect x="37" y="219" width="489" height="2" fill="#0000e6" />
<rect x="37" y="219" width="3" height="303" fill="#0000e6" />
<rect x="523.5" y="219" width="2.7" height="303" fill="#0000e6" />
<rect x="46" y="227" width="471.29999999999995" height="22.599999999999994" fill="none" stroke="#000" stroke-width="2"/>
<text x="200" y="242.8" font-size="12.22" fill="#000" stroke="#000" stroke-width="0.35" font-weight="bold" textLength="164.60" lengthAdjust="spacingAndGlyphs" >RESUMEN DE METRADOS</text>
<rect x="46" y="257.5" width="471.20000000000005" height="99.0" fill="none" stroke="#000" stroke-width="2"/>
<text x="55.6" y="274" font-size="8.75" fill="#000" stroke="#000" stroke-width="0.2" textLength="28.20" lengthAdjust="spacingAndGlyphs" >Proyecto</text>
<text x="100.6" y="274" font-size="6.67" fill="#000" stroke="#000" stroke-width="0.15" font-weight="bold" textLength="1.80" lengthAdjust="spacingAndGlyphs" >:</text>
<text x="106.9" y="274" font-size="8.61" fill="#000" stroke="#000" stroke-width="0.1" font-weight="bold" textLength="397.60" lengthAdjust="spacingAndGlyphs" >AMPLIACION , MEJORAMIENTO DEL SISTEMA DE AGUA POTABLE Y DESAGUE DE LAS LOCALIDADES DE SAN</text>
<text x="106.9" y="287" font-size="8.61" fill="#000" stroke="#000" stroke-width="0.1" font-weight="bold" textLength="386.90" lengthAdjust="spacingAndGlyphs" >ANTONIO DE ÑAUZA, SAN PEDRO DE CUMBE, SAN MIGUEL DE RANCAY, VICSACOCHA, CANCHAPARAN Y</text>
<text x="55.6" y="300" font-size="8.75" fill="#000" stroke="#000" stroke-width="0.2" textLength="32.50" lengthAdjust="spacingAndGlyphs" >Propietario</text>
<text x="100.6" y="300" font-size="6.67" fill="#000" stroke="#000" stroke-width="0.15" font-weight="bold" textLength="1.80" lengthAdjust="spacingAndGlyphs" >:</text>
<text x="106.9" y="300" font-size="8.61" fill="#000" stroke="#000" stroke-width="0.1" font-weight="bold" textLength="175.10" lengthAdjust="spacingAndGlyphs" >MUNICIPALIDAD DISTRITAL DE CONCHAMARCA</text>
<text x="55" y="313" font-size="8.75" fill="#000" stroke="#000" stroke-width="0.2" textLength="19.50" lengthAdjust="spacingAndGlyphs" >Fecha</text>
<text x="100.6" y="313" font-size="6.67" fill="#000" stroke="#000" stroke-width="0.15" font-weight="bold" textLength="1.80" lengthAdjust="spacingAndGlyphs" >:</text>
<text x="106.9" y="313" font-size="8.61" fill="#000" stroke="#000" stroke-width="0.1" font-weight="bold" textLength="56.80" lengthAdjust="spacingAndGlyphs" >septiembre/2013</text>
<text x="55.5" y="326" font-size="8.75" fill="#000" stroke="#000" stroke-width="0.2" textLength="39.50" lengthAdjust="spacingAndGlyphs" >Especialidad</text>
<text x="100.6" y="326" font-size="6.67" fill="#000" stroke="#000" stroke-width="0.15" font-weight="bold" textLength="1.80" lengthAdjust="spacingAndGlyphs" >:</text>
<text x="106.9" y="326" font-size="8.61" fill="#000" stroke="#000" stroke-width="0.1" font-weight="bold" textLength="105.60" lengthAdjust="spacingAndGlyphs" >INSTALACIONES SANITARIAS</text>
<text x="56.2" y="339.6" font-size="8.75" fill="#000" stroke="#000" stroke-width="0.2" textLength="22.60" lengthAdjust="spacingAndGlyphs" >Modulo</text>
<text x="100.6" y="339.6" font-size="6.67" fill="#000" stroke="#000" stroke-width="0.15" font-weight="bold" textLength="1.80" lengthAdjust="spacingAndGlyphs" >:</text>
<text x="106.9" y="339.6" font-size="8.61" fill="#000" stroke="#000" stroke-width="0.1" font-weight="bold" textLength="120.10" lengthAdjust="spacingAndGlyphs" >SISTEMA AGUA POTABLE ÑAUSA</text>
<text x="415" y="313" font-size="8.75" fill="#000" stroke="#000" stroke-width="0.2" textLength="32.50" lengthAdjust="spacingAndGlyphs" >Hecho por</text>
<text x="459.5" y="313" font-size="6.67" fill="#000" stroke="#000" stroke-width="0.15" textLength="1.50" lengthAdjust="spacingAndGlyphs" >:</text>
<text x="413.8" y="339.6" font-size="8.75" fill="#000" stroke="#000" stroke-width="0.2" textLength="47.50" lengthAdjust="spacingAndGlyphs" >Revidado por :</text>
<rect x="46" y="364.4" width="471.29999999999995" height="26.200000000000045" fill="#d9d9d9" stroke="#000" stroke-width="2"/>
<text x="67.5" y="380.1" font-size="8.19" fill="#000" stroke="#000" stroke-width="0.2" font-weight="bold" textLength="16.50" lengthAdjust="spacingAndGlyphs" >ITEM</text>
<text x="217" y="380.1" font-size="8.19" fill="#000" stroke="#000" stroke-width="0.2" font-weight="bold" textLength="50.60" lengthAdjust="spacingAndGlyphs" >DESCRIPCION</text>
<text x="386.5" y="380.1" font-size="8.19" fill="#000" stroke="#000" stroke-width="0.2" font-weight="bold" textLength="16.30" lengthAdjust="spacingAndGlyphs" >Und.</text>
<text x="424.4" y="380.1" font-size="8.19" fill="#000" stroke="#000" stroke-width="0.2" font-weight="bold" textLength="23.40" lengthAdjust="spacingAndGlyphs" >Parcial</text>
<text x="482.5" y="380.1" font-size="8.19" fill="#000" stroke="#000" stroke-width="0.2" font-weight="bold" textLength="16.90" lengthAdjust="spacingAndGlyphs" >Total</text>
<line x1="104.5" y1="365.5" x2="104.5" y2="389.5" stroke="#000" stroke-width="1" stroke-dasharray="1.4 1.6"/>
<line x1="380.5" y1="365.5" x2="380.5" y2="389.5" stroke="#000" stroke-width="1" stroke-dasharray="1.4 1.6"/>
<line x1="408.5" y1="365.5" x2="408.5" y2="389.5" stroke="#000" stroke-width="1" stroke-dasharray="1.4 1.6"/>
<line x1="463.5" y1="365.5" x2="463.5" y2="389.5" stroke="#000" stroke-width="1" stroke-dasharray="1.4 1.6"/>
<line x1="104.5" y1="392" x2="104.5" y2="522" stroke="#000" stroke-width="1" stroke-dasharray="1.4 1.6"/>
<line x1="380.5" y1="392" x2="380.5" y2="522" stroke="#000" stroke-width="1" stroke-dasharray="1.4 1.6"/>
<line x1="408.5" y1="392" x2="408.5" y2="522" stroke="#000" stroke-width="1" stroke-dasharray="1.4 1.6"/>
<line x1="463.5" y1="392" x2="463.5" y2="522" stroke="#000" stroke-width="1" stroke-dasharray="1.4 1.6"/>
<line x1="517.5" y1="392" x2="517.5" y2="522" stroke="#000" stroke-width="1" stroke-dasharray="1.4 1.6"/>
<line x1="46.5" y1="397" x2="46.5" y2="522" stroke="#000" stroke-width="1" stroke-dasharray="1.4 1.6"/>
<line x1="46" y1="397.5" x2="518" y2="397.5" stroke="#000" stroke-width="1" stroke-dasharray="1.4 1.6"/>
<line x1="46" y1="410.5" x2="518" y2="410.5" stroke="#000" stroke-width="1" stroke-dasharray="1.4 1.6"/>
<line x1="46" y1="424.5" x2="518" y2="424.5" stroke="#000" stroke-width="1" stroke-dasharray="1.4 1.6"/>
<line x1="46" y1="437.5" x2="518" y2="437.5" stroke="#000" stroke-width="1" stroke-dasharray="1.4 1.6"/>
<line x1="46" y1="450.5" x2="518" y2="450.5" stroke="#000" stroke-width="1" stroke-dasharray="1.4 1.6"/>
<line x1="46" y1="463.5" x2="518" y2="463.5" stroke="#000" stroke-width="1" stroke-dasharray="1.4 1.6"/>
<line x1="46" y1="476.5" x2="518" y2="476.5" stroke="#000" stroke-width="1" stroke-dasharray="1.4 1.6"/>
<line x1="46" y1="490.5" x2="518" y2="490.5" stroke="#000" stroke-width="1" stroke-dasharray="1.4 1.6"/>
<line x1="46" y1="503.5" x2="518" y2="503.5" stroke="#000" stroke-width="1" stroke-dasharray="1.4 1.6"/>
<line x1="46" y1="516.5" x2="518" y2="516.5" stroke="#000" stroke-width="1" stroke-dasharray="1.4 1.6"/>
<clipPath id="sheetclip"><rect x="20" y="194" width="763" height="328"/></clipPath>
<g clip-path="url(#sheetclip)">
<text x="116" y="407.0" font-size="8.89" fill="#ff0000" stroke="#ff0000" stroke-width="0.25" font-weight="bold" textLength="152.40" lengthAdjust="spacingAndGlyphs" >SISTEMA AGUA POTABLE ÑAUSA ( 4 UND)</text>
<text x="48.2" y="420.7" font-size="8.89" fill="#0000ff" stroke="#0000ff" stroke-width="0.25" font-weight="bold" textLength="7.50" lengthAdjust="spacingAndGlyphs" >02</text>
<text x="125.6" y="420.7" font-size="8.89" fill="#0000ff" stroke="#0000ff" stroke-width="0.25" font-weight="bold" textLength="87.40" lengthAdjust="spacingAndGlyphs" >OBRAS PROVISIONALES</text>
<text x="48.2" y="433.9" font-size="8.89" fill="#000" stroke="#000" stroke-width="0.25" textLength="17.20" lengthAdjust="spacingAndGlyphs" >02.01</text>
<text x="134.4" y="433.9" font-size="8.89" fill="#000" stroke="#000" stroke-width="0.25" textLength="169.60" lengthAdjust="spacingAndGlyphs" >LINEA DE REDES DE DISTRIBUCION Y ADUCCION</text>
<text x="48.2" y="447.0" font-size="8.89" fill="#000" stroke="#000" stroke-width="0.25" textLength="27.40" lengthAdjust="spacingAndGlyphs" >02.01.01</text>
<text x="134.4" y="447.0" font-size="8.89" fill="#000" stroke="#000" stroke-width="0.25" textLength="117.60" lengthAdjust="spacingAndGlyphs" >LIMPIEZA DE TERRENO NATURAL</text>
<text x="391.6" y="447.0" font-size="8.90" fill="#000" stroke="#000" stroke-width="0.2" textLength="6.60" lengthAdjust="spacingAndGlyphs" >m</text>
<text x="433.4" y="447.0" font-size="8.89" fill="#000" stroke="#000" stroke-width="0.25" textLength="28.20" lengthAdjust="spacingAndGlyphs" >2,042.92</text>
<text x="487.8" y="447.0" font-size="8.89" fill="#000" stroke="#000" stroke-width="0.25" textLength="27.60" lengthAdjust="spacingAndGlyphs" >8,171.68</text>
<text x="48.2" y="460.0" font-size="8.89" fill="#0000ff" stroke="#0000ff" stroke-width="0.25" font-weight="bold" textLength="28.20" lengthAdjust="spacingAndGlyphs" >02.01.02</text>
<text x="125.5" y="460.0" font-size="8.89" fill="#0000ff" stroke="#0000ff" stroke-width="0.25" font-weight="bold" textLength="126.50" lengthAdjust="spacingAndGlyphs" >TRAZO NIVELACION Y REPLANTEO</text>
<text x="391.6" y="460.0" font-size="8.90" fill="#0000ff" stroke="#0000ff" stroke-width="0.2" textLength="6.60" lengthAdjust="spacingAndGlyphs" >m</text>
<text x="433.4" y="460.0" font-size="8.89" fill="#0000ff" stroke="#0000ff" stroke-width="0.25" font-weight="bold" textLength="28.20" lengthAdjust="spacingAndGlyphs" >2,042.92</text>
<text x="487.3" y="460.0" font-size="8.89" fill="#0000ff" stroke="#0000ff" stroke-width="0.25" font-weight="bold" textLength="28.10" lengthAdjust="spacingAndGlyphs" >8,171.68</text>
<text x="48.2" y="473.0" font-size="8.89" fill="#000" stroke="#000" stroke-width="0.25" textLength="27.40" lengthAdjust="spacingAndGlyphs" >02.01.03</text>
<text x="134.4" y="473.0" font-size="8.89" fill="#000" stroke="#000" stroke-width="0.25" textLength="239.20" lengthAdjust="spacingAndGlyphs" >EXCAVACIÓN MANUAL EN TERRENO DE CONGLOMERADO 0.4x0.8m</text>
<text x="391.6" y="473.0" font-size="8.90" fill="#000" stroke="#000" stroke-width="0.2" textLength="6.60" lengthAdjust="spacingAndGlyphs" >m</text>
<text x="433.4" y="473.0" font-size="8.89" fill="#000" stroke="#000" stroke-width="0.25" textLength="28.20" lengthAdjust="spacingAndGlyphs" >1,916.70</text>
<text x="487.8" y="473.0" font-size="8.89" fill="#000" stroke="#000" stroke-width="0.25" textLength="27.60" lengthAdjust="spacingAndGlyphs" >7,666.80</text>
<text x="48.2" y="486.7" font-size="8.89" fill="#000" stroke="#000" stroke-width="0.25" textLength="27.40" lengthAdjust="spacingAndGlyphs" >02.01.04</text>
<text x="134.4" y="486.7" font-size="8.89" fill="#000" stroke="#000" stroke-width="0.25" textLength="178.00" lengthAdjust="spacingAndGlyphs" >EXCAVACIÓN MANUAL EN ROCA SUELTA 0.4x0.8m</text>
<text x="391.6" y="486.7" font-size="8.90" fill="#000" stroke="#000" stroke-width="0.2" textLength="6.60" lengthAdjust="spacingAndGlyphs" >m</text>
<text x="443.4" y="486.7" font-size="8.89" fill="#000" stroke="#000" stroke-width="0.25" textLength="18.20" lengthAdjust="spacingAndGlyphs" >42.07</text>
<text x="494.4" y="486.7" font-size="8.89" fill="#000" stroke="#000" stroke-width="0.25" textLength="21.00" lengthAdjust="spacingAndGlyphs" >168.28</text>
<text x="48.2" y="499.6" font-size="8.89" fill="#000" stroke="#000" stroke-width="0.25" textLength="27.40" lengthAdjust="spacingAndGlyphs" >02.01.05</text>
<text x="134.4" y="499.6" font-size="8.89" fill="#000" stroke="#000" stroke-width="0.25" textLength="165.60" lengthAdjust="spacingAndGlyphs" >EXCAVACIÓN MANUAL EN ROCA FIJA 0.4x0.8m</text>
<text x="391.6" y="499.6" font-size="8.90" fill="#000" stroke="#000" stroke-width="0.2" textLength="6.60" lengthAdjust="spacingAndGlyphs" >m</text>
<text x="443.4" y="499.6" font-size="8.89" fill="#000" stroke="#000" stroke-width="0.25" textLength="18.20" lengthAdjust="spacingAndGlyphs" >84.14</text>
<text x="494.4" y="499.6" font-size="8.89" fill="#000" stroke="#000" stroke-width="0.25" textLength="21.00" lengthAdjust="spacingAndGlyphs" >336.56</text>
<text x="48.2" y="512.7" font-size="8.89" fill="#000" stroke="#000" stroke-width="0.25" textLength="27.40" lengthAdjust="spacingAndGlyphs" >02.01.06</text>
<text x="134.4" y="512.7" font-size="8.89" fill="#000" stroke="#000" stroke-width="0.25" textLength="196.20" lengthAdjust="spacingAndGlyphs" >CAMA DE TIERRA ZARANDEADA E=0.1m. ZANJA P/TUBO</text>
<text x="391.6" y="512.7" font-size="8.90" fill="#000" stroke="#000" stroke-width="0.2" textLength="6.60" lengthAdjust="spacingAndGlyphs" >m</text>
<text x="433.4" y="512.7" font-size="8.89" fill="#000" stroke="#000" stroke-width="0.25" textLength="28.20" lengthAdjust="spacingAndGlyphs" >2,042.92</text>
<text x="487.8" y="512.7" font-size="8.89" fill="#000" stroke="#000" stroke-width="0.25" textLength="27.60" lengthAdjust="spacingAndGlyphs" >8,171.68</text>
<text x="48.2" y="526.0" font-size="8.89" fill="#000" stroke="#000" stroke-width="0.25" textLength="27.40" lengthAdjust="spacingAndGlyphs" >02.01.07</text>
<clipPath id="c26"><rect x="105" y="516" width="275" height="10"/></clipPath><g clip-path="url(#c26)">
<text x="134.4" y="526.0" font-size="8.89" fill="#000" stroke="#000" stroke-width="0.25" textLength="285.60" lengthAdjust="spacingAndGlyphs" >RELLENO Y COMPACTADO DE ZANJA 0.4x0.8m. CON MATERIAL SELECCIONADO</text>
</g>
<text x="391.6" y="526.0" font-size="8.90" fill="#000" stroke="#000" stroke-width="0.2" textLength="6.60" lengthAdjust="spacingAndGlyphs" >m</text>
<text x="433.4" y="526.0" font-size="8.89" fill="#000" stroke="#000" stroke-width="0.25" textLength="28.20" lengthAdjust="spacingAndGlyphs" >2,042.92</text>
<text x="487.8" y="526.0" font-size="8.89" fill="#000" stroke="#000" stroke-width="0.25" textLength="27.60" lengthAdjust="spacingAndGlyphs" >8,171.68</text>
</g>
<rect x="104.5" y="411" width="275.5" height="13" fill="none" stroke="#217346" stroke-width="2"/>
<rect x="377.5" y="421.5" width="5" height="5" fill="#217346" />
<rect x="377.5" y="421.5" width="5" height="5" fill="#217346" stroke="#fff" stroke-width="0.6"/>
<path d="M46.3 410.8h4.8l-4.8 4.6z" fill="#217346"/><path d="M46.3 424.6h4.8l-4.8 4.6z" fill="#217346"/>
<rect x="783" y="194" width="16" height="328" fill="#f2f2f2" />
<rect x="785.5" y="183.5" width="11.5" height="11" fill="#fff" stroke="#ababab" stroke-width="1"/><path d="M788 191h6.5l-3.25-3.5z" fill="#555"/>
<rect x="785.5" y="194.5" width="11" height="12.8" fill="#fff" stroke="#ababab" stroke-width="1"/>
<rect x="785.5" y="511.5" width="11.5" height="10.5" fill="#fff" stroke="#ababab" stroke-width="1"/><path d="M788 514.5h6.5l-3.25 3.5z" fill="#555"/>
<rect x="1" y="522.5" width="798" height="20" fill="#f4f4f4" />
<rect x="1" y="542.3" width="798" height="2" fill="#fff" />
<line x1="1" y1="522.5" x2="799" y2="522.5" stroke="#c6c6c6" stroke-width="1" />
<path d="M25.5 529.8v5.7l-4.2-2.85z" fill="#c0c0c0"/><path d="M43.8 529.8v5.7l4.2-2.85z" fill="#c0c0c0"/>
<line x1="78.5" y1="525.5" x2="78.5" y2="541" stroke="#c6c6c6" stroke-width="1" />
<line x1="127.5" y1="525.5" x2="127.5" y2="541" stroke="#c6c6c6" stroke-width="1" />
<line x1="342.5" y1="525.5" x2="342.5" y2="541" stroke="#c6c6c6" stroke-width="1" />
<rect x="186.7" y="522.5" width="65.8" height="19" fill="#fff" />
<rect x="186.7" y="539.5" width="65.8" height="2" fill="#217346" />
<text x="88.8" y="536.3" font-size="9.86" fill="#444" stroke="#444" stroke-width="0.15" textLength="28.70" lengthAdjust="spacingAndGlyphs" >Param</text>
<text x="136.3" y="536.3" font-size="9.86" fill="#444" stroke="#444" stroke-width="0.15" textLength="40.00" lengthAdjust="spacingAndGlyphs" >Metrado</text>
<text x="196.5" y="536.6" font-size="11.25" fill="#217346" stroke="#217346" stroke-width="0.2" font-weight="bold" textLength="45.40" lengthAdjust="spacingAndGlyphs" >RESUMEN</text>
<text x="262.6" y="536.3" font-size="9.86" fill="#444" stroke="#444" stroke-width="0.15" textLength="68.40" lengthAdjust="spacingAndGlyphs" >SANEAMIENTO</text>
<circle cx="374.5" cy="533" r="6" fill="none" stroke="#777" stroke-width="1.1"/><path d="M374.5 529.5v7M371 533h7" stroke="#777" stroke-width="1.2"/>
<rect x="641" y="528.5" width="1" height="1.2" fill="#999" />
<rect x="641" y="532" width="1" height="1.2" fill="#999" />
<rect x="641" y="535.5" width="1" height="1.2" fill="#999" />
<rect x="654.5" y="528.5" width="10.5" height="10.5" fill="#fff" stroke="#ababab" stroke-width="1"/><path d="M661.8 530.8v6l-3.5-3z" fill="#555"/>
<rect x="665" y="528.5" width="75.5" height="10.5" fill="#fff" stroke="#ababab" stroke-width="1"/>
<rect x="741" y="529" width="29" height="10" fill="#e6e6e6" />
<rect x="770.5" y="528.5" width="10.5" height="10.5" fill="#fff" stroke="#ababab" stroke-width="1"/><path d="M773.8 530.8v6l3.5-3z" fill="#555"/>
<rect x="0" y="544.2" width="800" height="17.8" fill="#217346" />
<text x="6.75" y="555.75" font-size="9.10" fill="#fff" stroke="#fff" stroke-width="0.15" textLength="20.25" lengthAdjust="spacingAndGlyphs" >LISTO</text>
<circle cx="46.2" cy="549.6" r="2" fill="#e8efe9"/><path d="M49 548.5h4.8v8.3h-9.3v-4.3" fill="none" stroke="#e8efe9" stroke-width="1"/><path d="M46 553.5h1.3M48.5 553.5h1.3M51 553.5h1.3M46 555.3h1.3M48.5 555.3h1.3M51 555.3h1.3" stroke="#e8efe9" stroke-width="1"/>
<path d="M571.5 547.5h9v9.5h-9zM571.5 550.7h9M571.5 553.9h9M574.5 547.5v9.5M577.5 547.5v9.5" fill="none" stroke="#fff" stroke-width="1"/>
<rect x="600.5" y="547.5" width="10" height="9.5" fill="none" stroke="#fff" stroke-width="1"/><rect x="602.5" y="549.5" width="6" height="5.5" fill="none" stroke="#fff" stroke-width="0.8"/>
<rect x="620.4" y="544.2" width="29.7" height="17.8" fill="#1a5e39" />
<rect x="630" y="547.5" width="10.5" height="9.5" fill="none" stroke="#fff" stroke-width="1"/><rect x="632" y="547.5" width="2.5" height="6" fill="#fff"/><rect x="636" y="547.5" width="2.5" height="6" fill="#fff"/>
<rect x="653.6" y="552.3" width="4.8" height="1.2" fill="#fff" />
<rect x="662" y="552.5" width="78" height="1" fill="#fff" />
<rect x="698.6" y="548" width="3" height="9.5" fill="#fff" />
<path d="M742.5 553h6.5M745.75 549.5v7" stroke="#fff" stroke-width="1.3"/>
<text x="761" y="556.4" font-size="10.83" fill="#fff" stroke="#fff" stroke-width="0.15" textLength="22.50" lengthAdjust="spacingAndGlyphs" >100 %</text>
<text x="574.9" y="554.5" font-size="14.4" fill="#fff" fill-opacity="0.42" textLength="112.5" lengthAdjust="spacingAndGlyphs">Activar Windows</text>
<rect x="0" y="0" width="800" height="1.5" fill="#217346" />
<rect x="0" y="0" width="1" height="562" fill="#217346" />
<rect x="798.5" y="0" width="1.5" height="562" fill="#217346" />
</svg></body></html>
